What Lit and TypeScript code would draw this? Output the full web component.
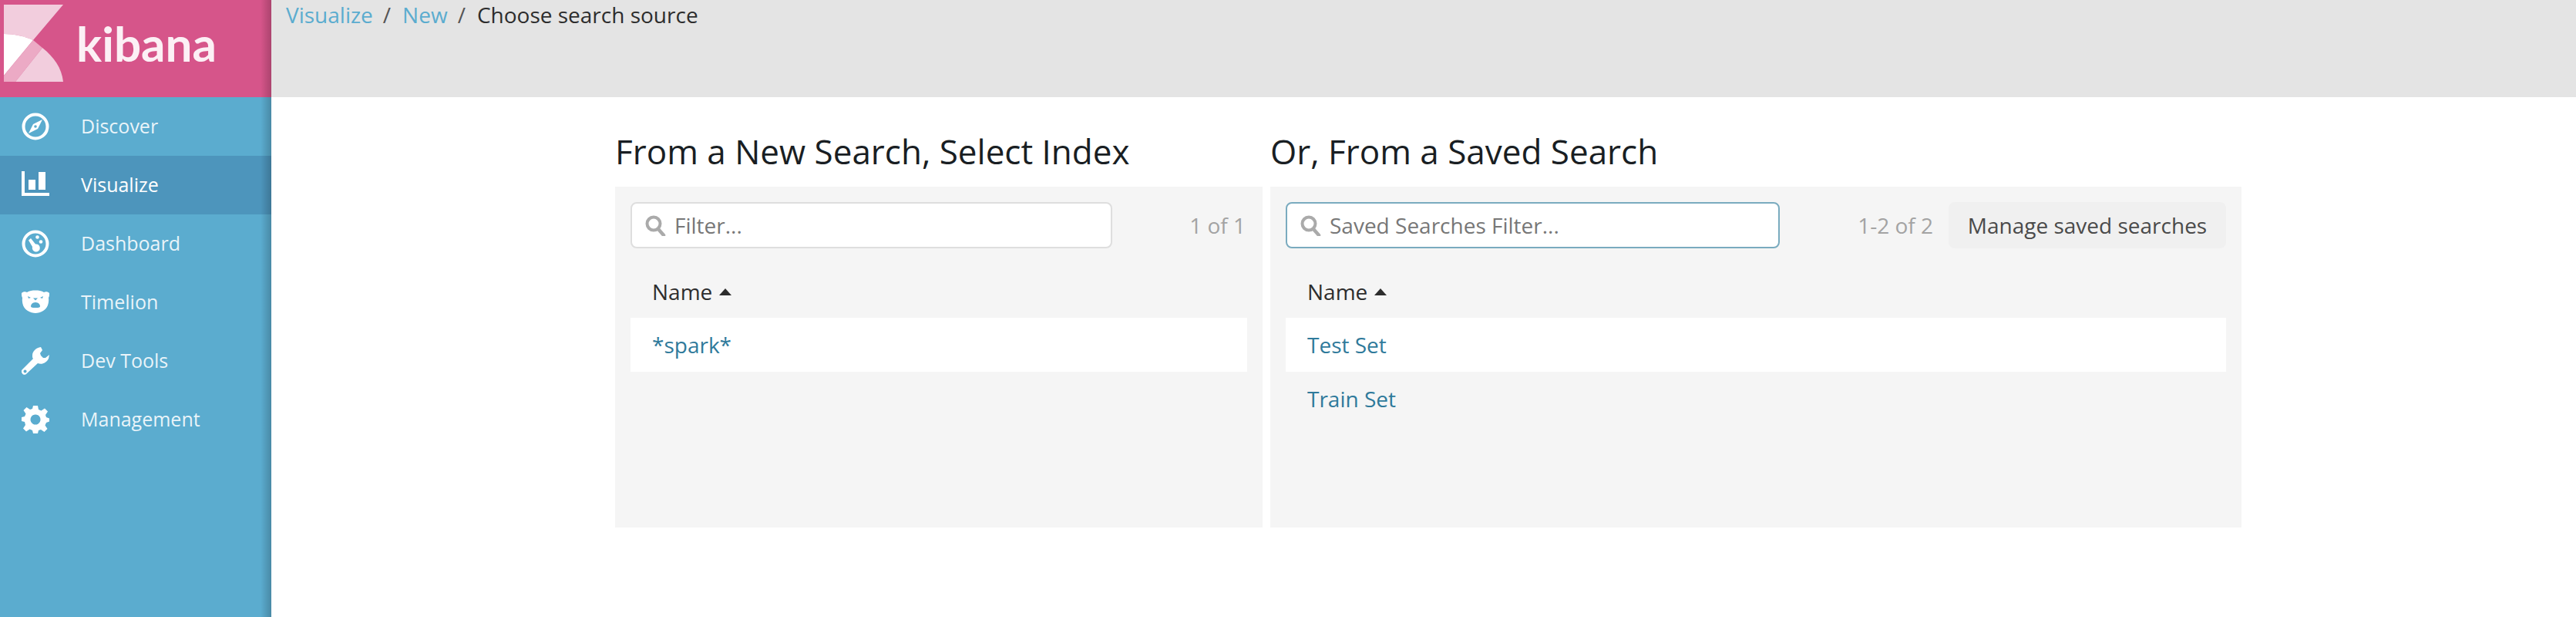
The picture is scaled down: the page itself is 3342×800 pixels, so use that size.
import { LitElement, css, html, svg } from 'lit';
import { customElement } from 'lit/decorators.js';

const icons: Record<string, unknown> = {
  discover: svg`<circle cx="18" cy="18" r="15.5" fill="none" stroke="#fff" stroke-width="4"/><path d="M27 9 L21 21 L9 27 L15 15 Z" fill="#fff"/><circle cx="18" cy="18" r="1.8" fill="#5baccf"/>`,
  visualize: svg`<path d="M0 0h4v28h32v4H0z" fill="#fff"/><rect x="9" y="11" width="9" height="13" fill="#fff"/><rect x="22" y="1" width="9" height="23" fill="#fff"/>`,
  dashboard: svg`<circle cx="18" cy="18" r="15.5" fill="none" stroke="#fff" stroke-width="4"/><path d="M9 13.5l3-2.5 6 7.500a5 5 0 1 1-4 3.500z" fill="#fff"/><circle cx="20.5" cy="9.5" r="2.3" fill="#fff"/><circle cx="25" cy="15.5" r="2.3" fill="#fff"/>`,
  timelion: svg`<g transform="translate(0 3)"><path d="M0 3c2-2 5-2 7-1 3-2 7-2.500 11-2.500S26 0 29 2c2-1 5-1 7 1 0 3 0 4-1 6 1 8-2 14-7 17-3 2-7 3-10 3s-7-1-10-3C3 23 0 17 1 9 0 7 0 6 0 3z" fill="#fff"/><path d="M8 7l4 2-3 1zM28 7l-4 2 3 1z" fill="#5baccf"/><path d="M15 9.500h6l-3 3z" fill="#5baccf"/><path d="M18 15c4 0 6 3 6 5s-3 2-6 2-6 0-6-2 2-5 6-5z" fill="#5baccf"/></g>`,
  devtools: svg`<path fill-rule="evenodd" d="M25 0c-6 1-11 5-11 11 0 2 0 3 1 4L1 29c-2 2-1 4 0 5.500s4 2 5.500 0L21 21c5 2 11 0 14-6l1-5-5 4h-3l-3-3-1-3 3-4z M4.500 29.500a2 2 0 1 0 .1 0z" fill="#fff"/>`,
  management: svg`<path fill-rule="evenodd" d="M15 0h6l1 5 3.500 1.500 4.500-3 4 4-3 4.500L32 15l4 1.500v4L32 22l-1.500 3.500 3 4.500-4 4-4.500-3L22 32l-1 4h-6l-1-4-3.500-1.500-4.500 3-4-4 3-4.500L4 21l-4-1v-5l4-1 1.500-3.500-3-4.500 4-4 4.500 3L14 4z M18 11.500a6.500 6.500 0 1 0 .01 0z" fill="#fff"/>`,
};

const nav = [
  { id: 'discover', label: 'Discover' },
  { id: 'visualize', label: 'Visualize', active: true },
  { id: 'dashboard', label: 'Dashboard' },
  { id: 'timelion', label: 'Timelion' },
  { id: 'devtools', label: 'Dev Tools' },
  { id: 'management', label: 'Management' },
];

const searchIcon = html`<svg class="search" viewBox="0 0 27 27"><circle cx="11" cy="11" r="8.5" fill="none" stroke="#aaa" stroke-width="4"/><path d="M17 18l7 8" stroke="#aaa" stroke-width="4.5" stroke-linecap="round"/></svg>`;

@customElement('app-root')
export class AppRoot extends LitElement {
  render() {
    return html`
      <aside class="sidebar">
        <div class="brand">
          <svg class="logo" viewBox="0 0 77 100">
            <path d="M0 0H77L38 46C27 41 14 38 0 38Z" fill="#f2cddd"/>
            <path d="M0 38C14 38 27 41 38 46L0 92Z" fill="#fff"/>
            <path d="M38 46L50 56L15 100H0V92Z" fill="#ecaac5"/>
            <path d="M50 56C65 68 75 82 77 100H15Z" fill="#f2cddd"/>
          </svg>
          <span class="wordmark">kibana</span>
        </div>
        <nav>
          ${nav.map(
            (n) => html`<a class="item ${n.active ? 'active' : ''}">
              <svg class="icon" viewBox="0 0 36 36">${icons[n.id]}</svg>
              <span>${n.label}</span>
            </a>`,
          )}
        </nav>
      </aside>
      <main>
        <div class="topbar">
          <a class="crumb">Visualize</a><span class="sep">/</span><a class="crumb">New</a><span class="sep">/</span><span class="current">Choose search source</span>
        </div>
        <div class="columns">
          <section class="col left">
            <h2>From a New Search, Select Index</h2>
            <div class="panel">
              <div class="tools">
                <label class="filter">${searchIcon}<input placeholder="Filter..." /></label>
                <span class="count">1 of 1</span>
              </div>
              <div class="head">Name<i class="caret"></i></div>
              <a class="row odd">*spark*</a>
            </div>
          </section>
          <section class="col right">
            <h2>Or, From a Saved Search</h2>
            <div class="panel">
              <div class="tools">
                <label class="filter focus">${searchIcon}<input placeholder="Saved Searches Filter..." /></label>
                <span class="count">1-2 of 2</span>
                <button>Manage saved searches</button>
              </div>
              <div class="head">Name<i class="caret"></i></div>
              <a class="row odd">Test Set</a>
              <a class="row">Train Set</a>
            </div>
          </section>
        </div>
      </main>
    `;
  }

  static styles = css`
    :host {
      display: flex;
      width: 3342px;
      height: 800px;
      overflow: hidden;
      background: #fff;
      font-family: 'Open Sans', sans-serif;
      font-size: 30px;
      color: #2d2d2d;
    }
    .sidebar {
      position: relative;
      flex: 0 0 352px;
      background: #5baccf;
      color: #fff;
    }
    .sidebar::after {
      content: '';
      position: absolute;
      top: 0;
      right: 0;
      bottom: 0;
      width: 14px;
      background: linear-gradient(to right, rgba(0, 0, 0, 0), rgba(0, 0, 0, 0.2));
    }
    .brand {
      display: flex;
      align-items: flex-start;
      height: 126px;
      padding: 6px 0 0 5px;
      box-sizing: border-box;
      background: #d6558a;
    }
    .logo {
      width: 77px;
      height: 100px;
      flex: none;
    }
    .wordmark {
      margin: 13px 0 0 17px;
      font-family: Lato, sans-serif;
      font-size: 62px;
      line-height: 74px;
      font-weight: 700;
      color: #fcf0f5;
    }
    .item {
      display: flex;
      align-items: center;
      gap: 41px;
      height: 76px;
      padding-left: 28px;
      color: rgba(255, 255, 255, 0.88);
      font-size: 25px;
      font-weight: 500;
    }
    .item span {
      margin-top: -3px;
    }
    .item.active {
      background: #4d95bc;
      color: #fff;
    }
    .icon {
      width: 36px;
      height: 36px;
      flex: none;
    }
    main {
      flex: 1;
      min-width: 0;
    }
    .topbar {
      height: 126px;
      box-sizing: border-box;
      padding-left: 19px;
      background: #e4e4e4;
      line-height: 38px;
      font-size: 28px;
    }
    .crumb {
      color: #5baccf;
    }
    .sep {
      margin: 0 15px 0 13px;
      color: #555;
    }
    .columns {
      display: flex;
      gap: 10px;
      padding-left: 446px;
    }
    .col.left {
      width: 840px;
    }
    .col.right {
      width: 1260px;
    }
    h2 {
      margin: 0;
      height: 116px;
      box-sizing: border-box;
      padding-top: 40px;
      font-size: 44px;
      font-weight: 400;
      line-height: 60px;
      color: #191e23;
    }
    .panel {
      height: 442px;
      box-sizing: border-box;
      padding: 20px;
      background: #f5f5f5;
    }
    .tools {
      display: flex;
      align-items: center;
      height: 60px;
    }
    .filter {
      display: flex;
      align-items: center;
      box-sizing: border-box;
      width: 625px;
      height: 60px;
      padding-left: 17px;
      gap: 11px;
      border: 2px solid #dedede;
      border-radius: 8px;
      background: #fff;
    }
    .right .filter {
      width: 641px;
    }
    .filter.focus {
      border-color: #7aabbf;
    }
    .search {
      width: 27px;
      height: 27px;
      flex: none;
    }
    input {
      flex: 1;
      min-width: 0;
      border: 0;
      padding: 0;
      outline: 0;
      background: none;
      font: inherit;
      font-size: 28px;
    }
    input::placeholder {
      color: #777;
      opacity: 1;
    }
    .count {
      margin-left: auto;
      color: #a3a3a3;
      font-size: 28px;
    }
    .left .count {
      margin-right: 2px;
    }
    button {
      height: 60px;
      width: 360px;
      margin-left: 20px;
      padding: 0;
      border: 0;
      border-radius: 8px;
      background: #f0f0f0;
      color: #4a4a4a;
      font: inherit;
      font-size: 28px;
    }
    .head {
      display: flex;
      align-items: center;
      box-sizing: border-box;
      height: 90px;
      padding: 22px 0 0 28px;
      font-size: 28px;
    }
    .caret {
      width: 0;
      height: 0;
      margin-left: 9px;
      border: 8px solid transparent;
      border-top: 0;
      border-bottom: 9px solid #2d2d2d;
    }
    .row {
      display: flex;
      align-items: center;
      height: 70px;
      padding-left: 28px;
      font-size: 28px;
      color: #2f7a9b;
    }
    .row.odd {
      background: #fff;
    }
  `;
}

declare global {
  interface HTMLElementTagNameMap {
    'app-root': AppRoot;
  }
}
